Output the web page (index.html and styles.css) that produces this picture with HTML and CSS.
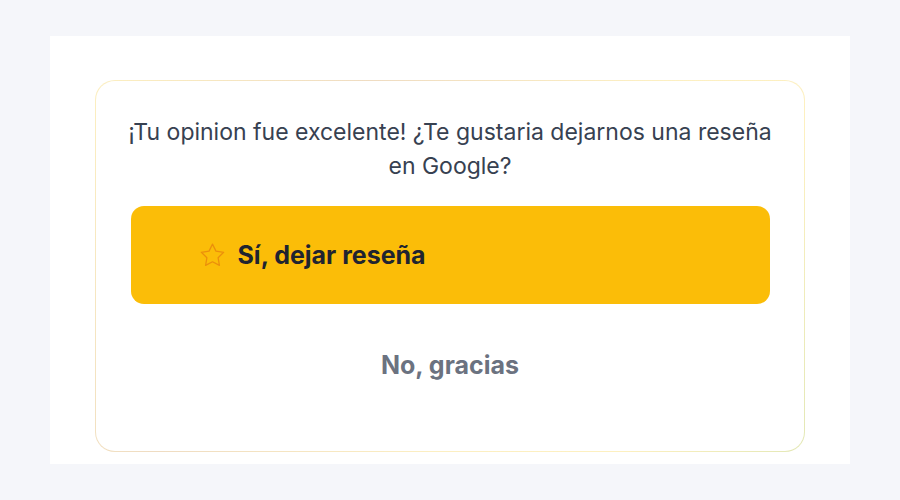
FILE: index.html
```html
<!DOCTYPE html>
<html lang="es">
<head>
<meta charset="utf-8">
<link rel="stylesheet" href="styles.css">
</head>
<body>
<div class="panel">
  <div class="card">
    <p class="question">¡Tu opinion fue excelente! ¿Te gustaria dejarnos una reseña en Google?</p>
    <button class="btn-yes">
      <svg class="star" viewBox="0 0 24 24" width="29" height="29"><path d="M12 2.6l2.85 5.8 6.4.93-4.63 4.5 1.1 6.37L12 17.2l-5.72 3 1.1-6.37-4.63-4.5 6.4-.93z" fill="none" stroke="#eb8f0c" stroke-width="1.05" stroke-linejoin="round"/></svg>
      <span>Sí, dejar reseña</span>
    </button>
    <button class="btn-no">No, gracias</button>
  </div>
</div>
</body>
</html>
```
FILE: styles.css
```css
html, body {
  margin: 0;
  padding: 0;
  background: #f5f6fa;
  font-family: Inter, "Noto Sans", sans-serif;
}
body {
  padding: 36px 50px 37px;
}
.panel {
  background: #ffffff;
  padding: 44px 45px 12px;
}
.card {
  border: 1.5px solid transparent;
  background:
    linear-gradient(#ffffff, #ffffff) padding-box,
    linear-gradient(120deg, #fcefc0 0%, #efdcc2 30%, #fcefc2 60%, #fdf0c0 80%, #e3e8b6 100%) border-box;
  border-radius: 20px;
  padding: 34px 34.5px 55px;
  display: flex;
  flex-direction: column;
  align-items: stretch;
}
.question {
  margin: 0 -10px;
  text-align: center;
  font-size: 23px;
  line-height: 34px;
  color: #374151;
}
.btn-yes {
  margin-top: 23px;
  height: 98px;
  border: none;
  border-radius: 13px;
  background: #fbbd08;
  display: flex;
  align-items: center;
  gap: 11px;
  padding: 0 0 0 67px;
  font-family: inherit;
  font-size: 25px;
  font-weight: 700;
  color: #1f2430;
}
.star {
  flex: none;
}
.btn-no {
  margin-top: 30px;
  height: 62px;
  border: none;
  background: transparent;
  font-family: inherit;
  font-size: 25px;
  font-weight: 700;
  color: #6b7280;
}
```
